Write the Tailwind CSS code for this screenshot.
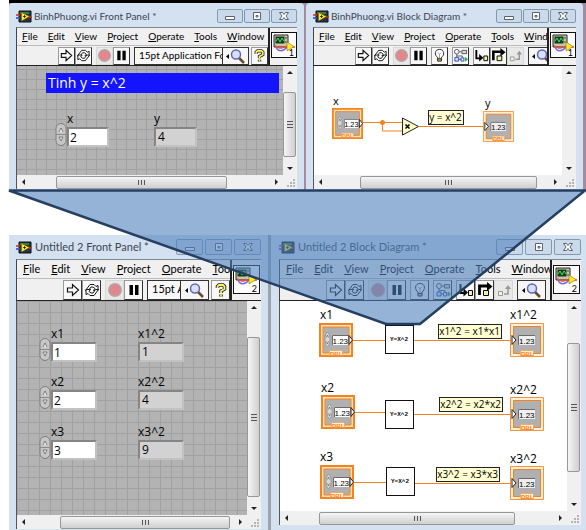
<!DOCTYPE html>
<html lang="vi">
  <head>
    <meta charset="UTF-8" />
    <meta name="viewport" content="width=device-width, initial-scale=1.0" />
    <title>BinhPhuong.vi – SubVI</title>
    <script src="https://cdn.jsdelivr.net/npm/@tailwindcss/browser@4"></script>
  </head>
  <body class="bg-white text-black font-['Lato','Open_Sans',sans-serif]">
    <!-- shared icons -->
    <svg class="hidden">
      <symbol id="vi" viewBox="0 0 16 13">
        <path d="M3 1h12v11H3z" fill="#25344a" stroke="#111" />
        <path d="M4 2h9v2H4z" fill="#3c7d3c" />
        <path d="M5.500 2.500l8 4-8 4.500z" fill="#ffe928" stroke="#6b5b00" stroke-width=".5" />
        <path d="M0 5h4M13 7h3" stroke="#e02a1a" stroke-width="1.6" />
        <path d="M0 8h4" stroke="#2d4fd0" stroke-width="1.6" />
        <path d="M7 6.500h3M8.500 5v3" stroke="#222" stroke-width=".8" />
      </symbol>
      <symbol id="run" viewBox="0 0 16 16">
        <path d="M2.500 6h5V2.500L13.500 8l-6 5.500V10h-5z" fill="#fff" stroke="#111" stroke-width="1.200" />
      </symbol>
      <symbol id="loop" viewBox="0 0 16 16" fill="#fff" stroke="#111">
        <path d="M1.500 8.500L6 2.500h4l2 2 2-1v5H9.500l1.500-2L9 5H7L4.500 8.500z" />
        <path d="M14.500 7.500L10 13.500H6l-2-2-2 1v-5h4.500L5 9.500 7 11h2l2.500-3.500z" />
      </symbol>
      <symbol id="abort" viewBox="0 0 16 16">
        <circle cx="8" cy="8" r="6.200" fill="#e3878c" stroke="#b3a5a5" stroke-width="1.500" />
      </symbol>
      <symbol id="pause" viewBox="0 0 16 16"><path d="M3.500 3h3.500v10H3.500zM9 3h3.500v10H9z" /></symbol>
      <symbol id="find" viewBox="0 0 24 16">
        <path d="M5 6v5L2 8.500z" />
        <path d="M15 10l5 5" stroke="#6b4a2c" stroke-width="2.500" />
        <circle cx="12" cy="6.500" r="4.500" fill="#d5e0ff" stroke="#6464b8" stroke-width="1.500" />
      </symbol>
      <symbol id="help" viewBox="0 0 16 16" fill="none">
        <path d="M4.500 6V4.500L6 3h4l1.500 1.500V7L8 9v2M8 12.500v2" stroke="#222" stroke-width="3.600" />
        <path d="M4.500 6V4.500L6 3h4l1.500 1.500V7L8 9v2M8 12.500v2" stroke="#fff36a" stroke-width="1.800" />
      </symbol>
      <symbol id="bulb" viewBox="0 0 16 16" fill="none" stroke="#222">
        <path d="M6 10C2.500 8 2.500 1.500 8 1.500s5.500 6.500 2 8.500v2H6z" fill="#fff" />
        <path d="M6.500 5l1.500 2 1.500-2M8 7v4" stroke="#999" />
        <path d="M6 11.500h4V14H6z" fill="#e8c030" />
      </symbol>
      <symbol id="retain" viewBox="0 0 16 16" fill="none" stroke="#555">
        <circle cx="4" cy="4" r="2.500" /><path d="M6.500 4H9M9.500 2.500h5v3.500h-5z" fill="#d8d8d8" />
        <path d="M4 6.500V10" stroke="#3a5ac0" /><path d="M2 10h4v4H2z" stroke="#2c50c8" fill="#cfe0ff" />
        <path d="M6 12h3M4 8.500h6V10" /><path d="M8.500 10.500h3V14h-3z" stroke="#2c50c8" /><path d="M13 10v4l2.500-2z" fill="#3aa84a" stroke="#3aa84a" />
      </symbol>
      <symbol id="into" viewBox="0 0 16 16">
        <path d="M2.500 2v9H7" fill="none" stroke="#000" stroke-width="2" /><path d="M5.500 6.500v8l4.500-4z" />
        <path d="M10.500 8.500h4v5h-4z" fill="#f5ee9a" stroke="#000" />
      </symbol>
      <symbol id="over" viewBox="0 0 16 16">
        <path d="M2.500 13V4H12" fill="none" stroke="#000" stroke-width="2.800" /><path d="M10 0l5.500 4.500L10 9z" />
        <path d="M6.500 8.500h5v5h-5z" fill="#f5ee9a" stroke="#000" />
      </symbol>
      <symbol id="out" viewBox="0 0 16 16">
        <path d="M2.500 9.500h4v4h-4z" fill="#f8f4d0" stroke="#999" />
        <path d="M8 12h4V6" fill="none" stroke="#999" stroke-width="1.600" /><path d="M9 7l3-4 3 4z" fill="#999" />
      </symbol>
      <symbol id="conn" viewBox="0 0 24 24">
        <path d="M2 2h14v12H2z" fill="#c9c6ae" stroke="#222" />
        <path d="M3.500 3.500h9v7h-9z" fill="#123c1c" />
        <path d="M4 8l2-3 2 4 2-4 2 3" fill="none" stroke="#4ee05c" />
        <path d="M14 4v2M14 8v2" stroke="#444" />
        <path d="M4 14c2 5 7 5 11 0" fill="none" stroke="#6a6af0" stroke-width="1.500" />
        <path d="M3 13c4 1 5 4 9 1h11" fill="none" stroke="#ef4a3a" stroke-width="1.500" />
        <path d="M15 9l7 4.500-7 4.500z" fill="#ffe928" stroke="#8a7400" stroke-width=".6" />
      </symbol>
      <!-- numeric control terminal -->
      <symbol id="ctl" viewBox="0 0 34 34">
        <path d="M1 1h32v32H1z" fill="#ffe2b8" stroke="#f5821f" stroke-width="2" />
        <path d="M4 4h26v26H4z" fill="#b0b0b0" stroke="#f5821f" />
        <ellipse cx="8.500" cy="16.500" rx="2.500" ry="7" fill="#d8d8d8" stroke="#8e8e8e" stroke-width=".8" />
        <path d="M7.500 14.500l1-2.500 1 2.500M7.500 18.500l1 2.500 1-2.500" fill="none" stroke="#666" stroke-width=".7" />
        <path d="M13 12h16v10H13z" fill="#fff" />
        <path d="M13.500 22V12.500H29" fill="none" stroke="#6a6a6a" />
        <path d="M30 12.500l3.500 4.500-3.500 4.500z" fill="#fff" stroke="#222" />
        <text x="13.500" y="20.500" font-size="8" class="font-['Liberation_Sans',sans-serif]">1.23</text>
        <path d="M10.500 27.500h13v5h-13z" fill="#fff0d8" stroke="#f5a050" stroke-width=".8" />
        <text x="11" y="32.500" font-size="6" font-weight="700" fill="#f5821f" class="font-['Liberation_Sans',sans-serif]">DBL</text>
      </symbol>
      <!-- numeric indicator terminal -->
      <symbol id="ind" viewBox="0 0 34 34">
        <path d="M.5.5h33v33H.5z" fill="#ffefd6" stroke="#f59440" />
        <path d="M3.500 3.500h27v27h-27z" fill="#b0b0b0" stroke="#f5821f" />
        <path d="M2 12.500l4 4.500-4 4.500z" fill="#fff" stroke="#222" />
        <path d="M8 12h17v10H8z" fill="#efefef" />
        <path d="M8.500 22V12.500H25" fill="none" stroke="#6a6a6a" />
        <text x="9" y="20.500" font-size="8" class="font-['Liberation_Sans',sans-serif]">1.23</text>
        <path d="M10.500 27.500h13v5h-13z" fill="#fff0d8" stroke="#f5a050" stroke-width=".8" />
        <text x="11" y="32.500" font-size="6" font-weight="700" fill="#f5821f" class="font-['Liberation_Sans',sans-serif]">DBL</text>
      </symbol>
    </svg>

    <main class="relative flex min-h-screen flex-col overflow-hidden">
      <div class="ml-[9px] grid grid-cols-[295fr_277fr] gap-[2px] border-t-3 border-black bg-[#a58c9c] pr-[3px]">
        <section id="front1" class="min-w-0 rounded-t bg-[#d3e1f0] px-[7px] pb-[2px]"></section>
        <section id="block1" class="min-w-0 rounded-t bg-[#d3e1f0] px-[7px] pb-[2px]"></section>
      </div>
      <div class="mt-[44px] ml-[9px] grid grow grid-cols-[259fr_315fr] gap-[3px] bg-[#9ba3ad]">
        <section id="front2" class="flex min-w-0 flex-col bg-[#d3e1f0] px-[7px] pb-px"></section>
        <section id="block2" class="flex min-w-0 flex-col bg-[#d3e1f0] pr-[5px] pb-[5px] pl-[8px]"></section>
      </div>

      <!-- zoom callout from the SubVI node to its own windows -->
      <svg class="pointer-events-none absolute inset-x-0 top-0 w-full" viewBox="0 0 586 530">
        <path d="M9 190.500h576L420 324h-34z" fill="#4f81bd" fill-opacity=".6" stroke="#243f60" stroke-width="2.500" />
      </svg>
    </main>

    <script>
      const MENUS = ["File", "Edit", "View", "Project", "Operate", "Tools", "Window"];

      const icon = (id, cls) => `<svg class="${cls}"><use href="#${id}" /></svg>`;

      // ===== title bar =====
      function titleBar(title, big) {
        const btn = big
          ? "grid h-4 w-[27px] place-items-center rounded-[2px] border border-[#8598b0] bg-[#cbdaea]"
          : "grid h-[14px] w-[26px] place-items-center rounded-[2px] border border-[#8598b0] bg-[#cbdaea]";
        const shapes = [
          ["Minimize", '<path d="M1.500 5.500h9v3h-9z" />'],
          ["Maximize", '<path d="M2.500 1.500h7v7h-7zM5 4.500h2v1.500H5z" />'],
          ["Close", '<path d="M1.500 1.500h3L6 3.500l1.500-2h3L8 5l2.500 3.500h-3L6 6.500l-1.500 2h-3L4 5z" />'],
        ];
        return `
          <header class="${big ? "flex h-[24px] shrink-0 items-center gap-[2px] text-[11px]" : "flex h-[24px] items-center gap-px pt-[2px] text-[10px]"}">
            ${icon("vi", "h-[13px] w-4 shrink-0")}
            <h1 class="grow truncate pl-px text-[#3d4650]">${title}</h1>
            ${shapes.map(([name, d]) => `
              <button aria-label="${name}" class="${btn}">
                <svg class="h-[10px] w-3" viewBox="0 0 12 10" fill="#fff" stroke="#59636f">${d}</svg>
              </button>`).join("")}
          </header>`;
      }

      // ===== menu, toolbar and connector icon =====
      function header({ big, block, number, gap }) {
        const btn = big
          ? "grid h-[20px] w-[19px] shrink-0 place-items-center border border-t-[#999] border-l-[#999] border-[#333] bg-[#f8f8f8]"
          : "grid h-[18px] w-[17px] shrink-0 place-items-center border border-t-[#999] border-l-[#999] border-[#333] bg-[#f8f8f8]";
        const off = big
          ? "grid h-[20px] w-[19px] shrink-0 place-items-center border border-[#d8d8d8] bg-[#e8e8e8]"
          : "grid h-[18px] w-[17px] shrink-0 place-items-center border border-[#d8d8d8] bg-[#e8e8e8]";
        const size = big ? "size-4" : "size-[15px]";
        const tool = (id, label, cls = btn) => `<button aria-label="${label}" class="${cls}">${icon(id, size)}</button>`;
        const find = `<button aria-label="Search" class="${big ? "grid h-[20px] w-[29px] shrink-0 place-items-center border border-[#333] bg-[#f6f6f6]" : "grid h-[18px] w-[27px] shrink-0 place-items-center border border-[#333] bg-[#f6f6f6]"}">${icon("find", "h-4 w-6")}</button>`;
        const extra = block
          ? `<div class="flex">${tool("bulb", "Highlight Execution")}</div>
             <div class="flex">${tool("retain", "Retain Wire Values")}</div>
             <div class="flex">${tool("into", "Step Into")}${tool("over", "Step Over")}${tool("out", "Step Out", off)}</div>
             ${find}`
          : `<div class="flex min-w-0 ${big ? "w-[62px]" : "w-[115px]"}">
               <select aria-label="Font" class="min-w-0 grow appearance-none border border-r-0 border-[#333] bg-[#f8f8f8] pl-1 ${big ? "text-[11px]" : "text-[10px]"}">
                 <option>15pt Application Font</option>
               </select>
               ${find}
             </div>
             <div class="-ml-[2px] flex">${tool("help", "Help")}</div>`;
        return `
          <div class="flex shrink-0 border-y border-l border-t-[#7d8794] border-b-[#222] border-l-[#444] bg-[#f0f0f0]">
            <div class="min-w-0 grow overflow-hidden">
              <nav class="${big ? "flex h-[19px] items-center gap-[11px] border-b border-[#bbb] pl-[6px] text-[11px]" : "flex h-[18px] items-center gap-[10px] border-b border-[#bbb] pl-[5px] text-[10px]"}">
                ${MENUS.map((m) => `<button><u>${m[0]}</u>${m.slice(1)}</button>`).join("")}
              </nav>
              <div class="flex items-center gap-[4px] ${big ? "h-[21px]" : "h-[19px]"} ${gap}">
                <div class="flex">${tool("run", "Run")}${tool("loop", "Run Continuously")}</div>
                <div class="flex">${tool("abort", "Abort", off)}${tool("pause", "Pause")}</div>
                ${extra}
              </div>
            </div>
            <div class="${big ? "w-[31px] shrink-0 border-l-2 border-[#222] pt-[5px] pl-px" : "w-[29px] shrink-0 border-l-2 border-[#222] pt-1 pl-px"}">
              <div class="relative border border-[#111] bg-white ${big ? "h-[29px] w-[27px]" : "size-[26px]"}">
                ${icon("conn", "size-6")}
                <span class="absolute right-[2px] bottom-0 text-[9px] leading-[9px]">${number}</span>
              </div>
            </div>
          </div>`;
      }

      // ===== scroll bars =====
      const arrow = (d) => `<svg class="size-[14px] shrink-0" viewBox="0 0 14 14" fill="#222"><path d="${d}" /></svg>`;

      function body(canvas, vThumb, hThumb) {
        return `
          <div class="flex grow border-l border-[#555]">
            ${canvas}
            <div class="flex w-[14px] shrink-0 flex-col bg-[#f0f0f0]">
              ${arrow("M4 8l3-3 3 3z")}
              <div class="grow">
                ${vThumb ? `<div class="${vThumb} grid w-[13px] place-items-center rounded-[2px] border border-[#979797] bg-linear-to-r from-[#f5f5f5] to-[#cfcfcf]">
                  <i class="h-[7px] w-[6px] border-y border-[#555] bg-[linear-gradient(#ddd_2px,#555_2px,#555_3px,#ddd_3px)]"></i></div>` : ""}
              </div>
              ${arrow("M4 6l3 3 3-3z")}
            </div>
          </div>
          <div class="flex h-[14px] shrink-0 items-center border-l border-[#555] bg-[#f0f0f0]">
            ${arrow("M8 4L5 7l3 3z")}
            <div class="grow">
              <div class="${hThumb} grid h-[13px] place-items-center rounded-[2px] border border-[#979797] bg-linear-to-b from-[#f5f5f5] to-[#cfcfcf]">
                <i class="h-[5px] w-[7px] border-x border-[#555] bg-[linear-gradient(90deg,#ddd_2px,#555_2px,#555_3px,#ddd_3px)]"></i>
              </div>
            </div>
            ${arrow("M6 4l3 3-3 3z")}
            <svg class="size-[14px] shrink-0" viewBox="0 0 14 14" fill="#b5b5b5"><path d="M10 4h2v2h-2zM7 7h2v2H7zM10 7h2v2h-2zM4 10h2v2H4zM7 10h2v2H7zM10 10h2v2h-2z" /></svg>
          </div>`;
      }

      // ===== front panel items =====
      function control(pos, name, value, width) {
        return `
          <div class="absolute ${pos} flex items-end">
            <svg class="h-6 w-3 shrink-0" viewBox="0 0 12 24">
              <rect x="1" y=".5" width="10" height="22" rx="5" fill="#c6c6c6" stroke="#7e7e7e" />
              <path d="M1 11.500h10" stroke="#8a8a8a" />
              <path d="M4 9l2-4 2 4M4 14l2 4 2-4z" fill="#eee" stroke="#666" stroke-width=".8" />
            </svg>
            <label class="leading-4">${name}
              <input value="${value}" class="block ${width} h-[20px] border-2 border-t-[#858585] border-r-[#c2c2c2] border-b-[#c2c2c2] border-l-[#858585] bg-white pl-px" />
            </label>
          </div>`;
      }

      function indicator(pos, name, value, width) {
        return `
          <label class="absolute ${pos} leading-4">${name}
            <output class="block ${width} h-[20px] border-2 border-t-[#858585] border-r-[#c2c2c2] border-b-[#c2c2c2] border-l-[#858585] bg-[#d2d2d2] pl-[2px]">${value}</output>
          </label>`;
      }

      // ===== block diagram items (window coordinates) =====
      const term = (id, x, y, s) => `<use href="#${id}" x="${x}" y="${y}" width="${s}" height="${s}" />`;
      const text = (x, y, t) => `<text x="${x}" y="${y}">${t}</text>`;
      const note = (x, y, w, t) =>
        `<rect x="${x + 0.5}" y="${y + 0.5}" width="${w}" height="14" fill="#ffffd2" stroke="#222" />
         <text x="${x + w / 2}" y="${y + 11}" text-anchor="middle" class="text-[10px]">${t}</text>`;
      const wire = (d) => `<path d="${d}" fill="none" stroke="#f5821f" />`;
      const subvi = (x, y) =>
        `<rect x="${x + 0.5}" y="${y + 0.5}" width="28" height="28" fill="#fff" stroke="#111" />
         <text x="${x + 14}" y="${y + 16}" text-anchor="middle" class="font-['Liberation_Mono',monospace] text-[6px] font-bold">Y=X^2</text>`;

      // ===== windows =====
      document.getElementById("front1").innerHTML =
        titleBar("BinhPhuong.vi Front Panel *", false) +
        header({ big: false, block: false, number: 1, gap: "pl-[41px]" }) +
        body(
          `<div class="relative h-[109px] grow bg-[#b3b3b3] bg-[linear-gradient(90deg,#a1a1a1_1px,transparent_1px),linear-gradient(#a1a1a1_1px,transparent_1px)] bg-size-[10px_10px] bg-position-[9px_3px] font-['Open_Sans',sans-serif] text-[12px]">
            <p class="mt-[7px] mr-1 ml-[29px] h-[20px] bg-[#1414ff] pl-[2px] text-[14px] leading-[20px] text-white">Tinh y = x^2</p>
            ${control("top-[45px] left-[38px]", "x", 2, "w-[42px]")}
            ${indicator("top-[45px] left-[137px]", "y", 4, "w-[43px]")}
          </div>`,
          "mt-[12px] h-[65px]", "ml-[25px] w-[171px]");

      document.getElementById("block1").innerHTML =
        titleBar("BinhPhuong.vi Block Diagram *", false) +
        header({ big: false, block: true, number: 1, gap: "pl-[41px]" }) +
        body(
          `<div class="h-[109px] grow bg-white">
            <svg class="h-[109px] w-[248px] font-['Open_Sans',sans-serif] text-[11px]" viewBox="314 66 248 109">
              ${wire("M363 122.500h40M382.500 122.500v8.500H403M419 126.500h66")}
              <circle cx="382.500" cy="122.500" r="2.500" fill="#f5821f" />
              <path d="M402.500 118v17l16-8.500z" fill="#ffffc8" stroke="#222" />
              <path d="M405.500 124.500l4 4M409.500 124.500l-4 4" stroke="#000" stroke-width="1.500" />
              ${text(333, 105, "x")}${text(485, 107, "y")}
              ${term("ctl", 332, 108, 31)}${term("ind", 483, 111, 31)}
              ${note(428, 110, 35, "y = x^2")}
            </svg>
          </div>`,
          "", "ml-[32px] w-[177px]");

      document.getElementById("front2").innerHTML =
        titleBar("Untitled 2 Front Panel *", true) +
        header({ big: true, block: false, number: 2, gap: "pl-[46px]" }) +
        body(
          `<div class="relative min-h-[212px] grow bg-[#b3b3b3] bg-[linear-gradient(90deg,#a1a1a1_1px,transparent_1px),linear-gradient(#a1a1a1_1px,transparent_1px)] bg-size-[11px_11px] bg-position-[11px_11px] font-['Open_Sans',sans-serif] text-[12px]">
            ${control("top-[25px] left-[22px]", "x1", 1, "w-[46px]")}
            ${control("top-[73px] left-[22px]", "x2", 2, "w-[46px]")}
            ${control("top-[123px] left-[22px]", "x3", 3, "w-[46px]")}
            ${indicator("top-[25px] left-[121px]", "x1^2", 1, "w-[46px]")}
            ${indicator("top-[73px] left-[121px]", "x2^2", 4, "w-[46px]")}
            ${indicator("top-[123px] left-[121px]", "x3^2", 9, "w-[46px]")}
          </div>`,
          "mt-[22px] h-[160px]", "ml-[29px] w-[170px]");

      document.getElementById("block2").innerHTML =
        titleBar("Untitled 2 Block Diagram *", true) +
        header({ big: true, block: true, number: 2, gap: "pl-[46px]" }) +
        body(
          `<div class="min-h-[209px] grow bg-white">
            <svg class="h-[209px] w-[286px] font-['Open_Sans',sans-serif] text-[12px]" viewBox="280 300 286 209">
              ${wire("M352 339.500H512M353 411.500h33M413 413.500h99M353 481.500h34M414 482.500h98")}
              ${text(320, 318, "x1")}${term("ctl", 319, 322, 34)}
              ${text(321, 391, "x2")}${term("ctl", 321, 394, 34)}
              ${text(320, 460, "x3")}${term("ctl", 320, 464, 34)}
              ${subvi(385, 324)}${subvi(385, 399)}${subvi(386, 466)}
              ${note(438, 323, 63, "x1^2 = x1*x1")}
              ${note(439, 396, 63, "x2^2 = x2*x2")}
              ${note(436, 466, 63, "x3^2 = x3*x3")}
              ${text(510, 318, "x1^2")}${term("ind", 510, 322, 34)}
              ${text(510, 393, "x2^2")}${term("ind", 510, 396, 34)}
              ${text(510, 462, "x3^2")}${term("ind", 510, 465, 34)}
            </svg>
          </div>`,
          "mt-[28px] h-[129px]", "ml-[25px] w-[196px]");
    </script>
  </body>
</html>
